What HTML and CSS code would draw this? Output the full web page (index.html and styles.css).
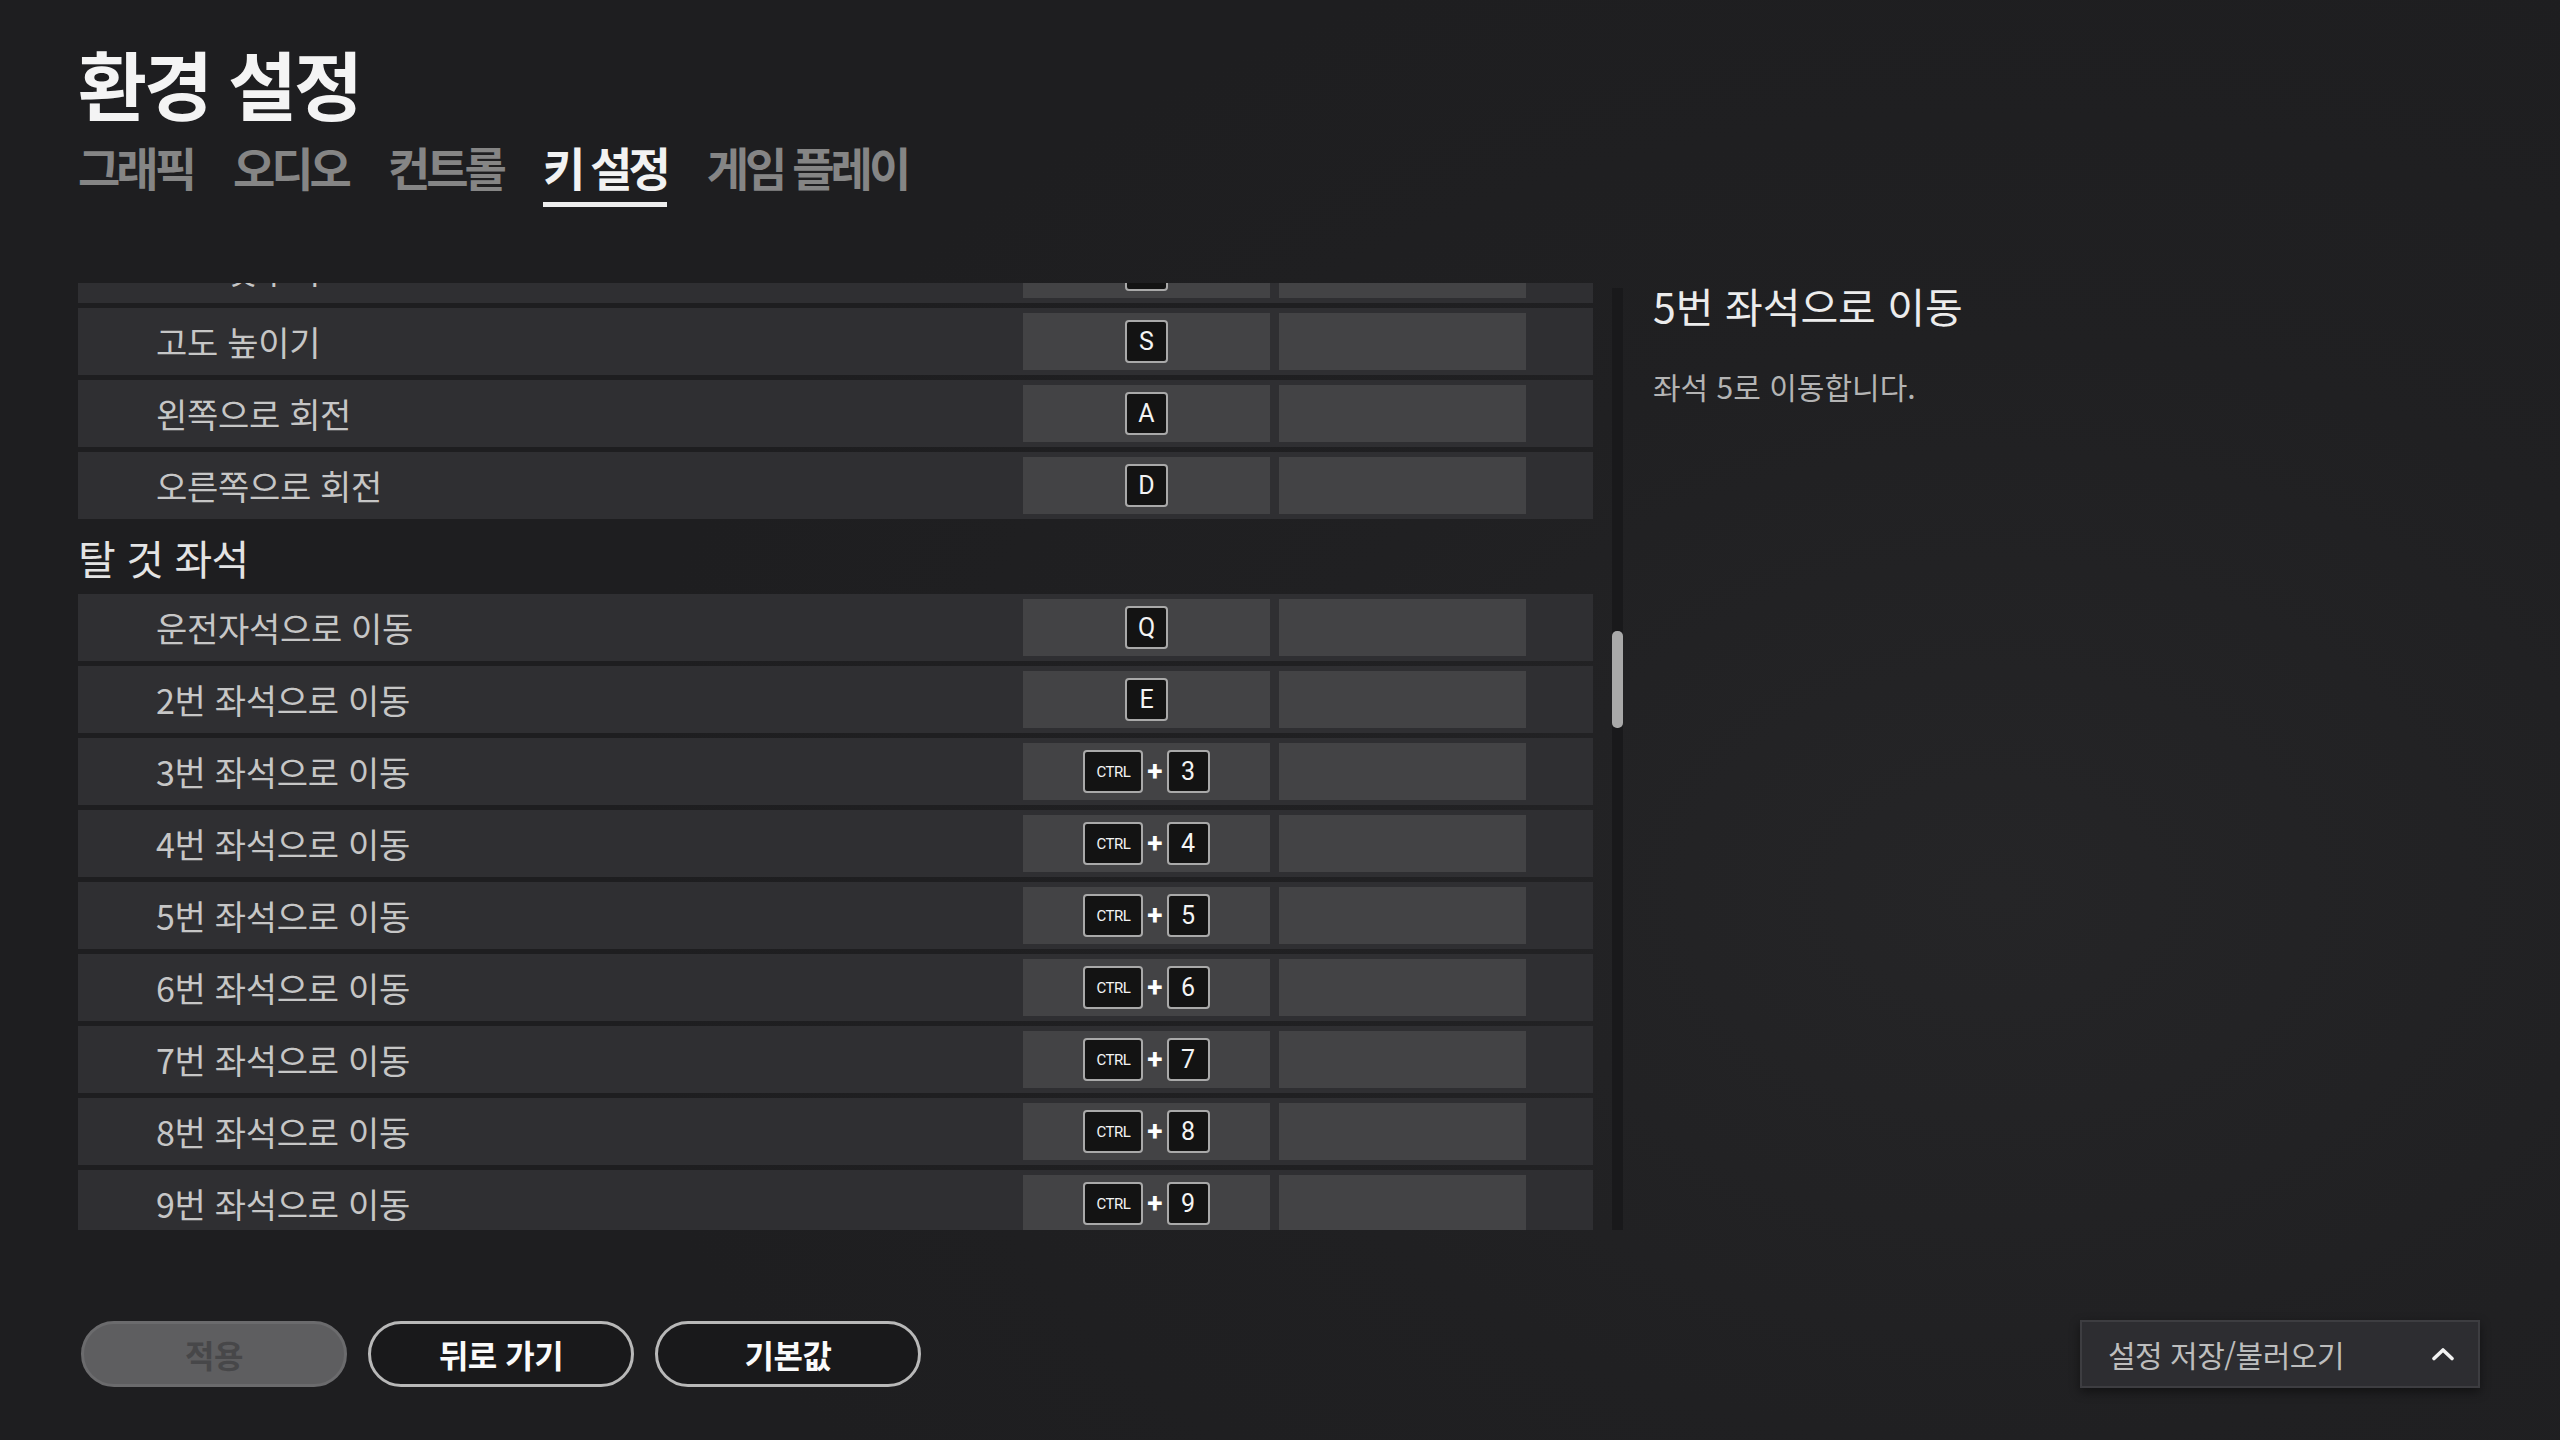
FILE: index.html
```html
<!DOCTYPE html>
<html lang="ko">
<head>
<meta charset="utf-8">
<title>환경 설정</title>
<link rel="stylesheet" href="styles.css">
</head>
<body>
<div class="screen">
  <h1 class="title">환경 설정</h1>
  <nav class="tabs">
    <div class="tab">그래픽</div>
    <div class="tab">오디오</div>
    <div class="tab">컨트롤</div>
    <div class="tab active">키 설정</div>
    <div class="tab">게임 플레이</div>
  </nav>

  <div class="main">
    <div class="list">
      <div class="list-inner">
        <div class="row"><span class="label">고도 낮추기</span><div class="cell"><span class="key">W</span></div><div class="cell"></div></div>
        <div class="row"><span class="label">고도 높이기</span><div class="cell"><span class="key">S</span></div><div class="cell"></div></div>
        <div class="row"><span class="label">왼쪽으로 회전</span><div class="cell"><span class="key">A</span></div><div class="cell"></div></div>
        <div class="row"><span class="label">오른쪽으로 회전</span><div class="cell"><span class="key">D</span></div><div class="cell"></div></div>
        <div class="section">탈 것 좌석</div>
        <div class="row"><span class="label">운전자석으로 이동</span><div class="cell"><span class="key">Q</span></div><div class="cell"></div></div>
        <div class="row"><span class="label">2번 좌석으로 이동</span><div class="cell"><span class="key">E</span></div><div class="cell"></div></div>
        <div class="row"><span class="label">3번 좌석으로 이동</span><div class="cell"><span class="key ctrl">CTRL</span><span class="plus">+</span><span class="key">3</span></div><div class="cell"></div></div>
        <div class="row"><span class="label">4번 좌석으로 이동</span><div class="cell"><span class="key ctrl">CTRL</span><span class="plus">+</span><span class="key">4</span></div><div class="cell"></div></div>
        <div class="row"><span class="label">5번 좌석으로 이동</span><div class="cell"><span class="key ctrl">CTRL</span><span class="plus">+</span><span class="key">5</span></div><div class="cell"></div></div>
        <div class="row"><span class="label">6번 좌석으로 이동</span><div class="cell"><span class="key ctrl">CTRL</span><span class="plus">+</span><span class="key">6</span></div><div class="cell"></div></div>
        <div class="row"><span class="label">7번 좌석으로 이동</span><div class="cell"><span class="key ctrl">CTRL</span><span class="plus">+</span><span class="key">7</span></div><div class="cell"></div></div>
        <div class="row"><span class="label">8번 좌석으로 이동</span><div class="cell"><span class="key ctrl">CTRL</span><span class="plus">+</span><span class="key">8</span></div><div class="cell"></div></div>
        <div class="row"><span class="label">9번 좌석으로 이동</span><div class="cell"><span class="key ctrl">CTRL</span><span class="plus">+</span><span class="key">9</span></div><div class="cell"></div></div>
      </div>
    </div>
    <div class="scroll"><div class="thumb"></div></div>
    <aside class="detail">
      <div class="detail-title">5번 좌석으로 이동</div>
      <div class="detail-desc">좌석 5로 이동합니다.</div>
    </aside>
  </div>

  <div class="footer">
    <div class="buttons">
      <div class="btn disabled">적용</div>
      <div class="btn">뒤로 가기</div>
      <div class="btn">기본값</div>
    </div>
    <div class="select">
      <span class="select-text">설정 저장/불러오기</span>
      <svg class="chev" width="24" height="14" viewBox="0 0 24 14"><path d="M3 11.5 L12 3 L21 11.5" stroke="#f2f2f2" stroke-width="3.6" fill="none" stroke-linecap="round" stroke-linejoin="round"/></svg>
    </div>
  </div>
</div>
</body>
</html>
```

FILE: styles.css
```css
html, body {
  margin: 0;
  padding: 0;
}

body {
  background: #1f1f21;
  font-family: "Noto Sans CJK KR", "Noto Sans", sans-serif;
}

.screen {
  width: 2560px;
  height: 1440px;
  box-sizing: border-box;
  padding: 45px 80px 0 78px;
  display: flex;
  flex-direction: column;
  overflow: hidden;
  background: radial-gradient(ellipse 1400px 1000px at 78% 62%, #252527 0%, #202022 55%, #1e1e20 100%);
}

.title {
  margin: 0;
  font-size: 75px;
  line-height: 75px;
  font-weight: 700;
  color: #f4f4f4;
  letter-spacing: -3px;
}

.tabs {
  display: flex;
  gap: 40px;
  margin-top: 23px;
  align-items: flex-start;
}

.tab {
  font-size: 46px;
  line-height: 46px;
  font-weight: 700;
  letter-spacing: -4px;
  color: #858585;
  padding-bottom: 13px;
  border-bottom: 5px solid transparent;
}

.tab.active {
  color: #f2f2f2;
  border-bottom-color: #eeeeee;
}

.main {
  display: flex;
  margin-top: 76px;
  height: 947px;
  flex: none;
}

.list {
  width: 1515px;
  height: 947px;
  overflow: hidden;
  flex: none;
}

.list-inner {
  margin-top: -47px;
  display: flex;
  flex-direction: column;
  gap: 5px;
}

.row {
  height: 67px;
  box-sizing: border-box;
  display: flex;
  align-items: center;
  gap: 9px;
  padding: 5px 67px 5px 78px;
  background: #2f2f32;
  flex: none;
}

.label {
  flex: 1;
  font-size: 34px;
  letter-spacing: -0.3px;
  color: #c6c6c6;
}

.cell {
  width: 247px;
  height: 57px;
  background: #434345;
  display: flex;
  align-items: center;
  justify-content: center;
  flex: none;
}

.section {
  height: 65px;
  display: flex;
  align-items: center;
  font-size: 41px;
  letter-spacing: -0.5px;
  color: #e4e4e4;
  flex: none;
}

.key {
  box-sizing: border-box;
  width: 43px;
  height: 43px;
  border: 2px solid #a9a9a9;
  border-radius: 4px;
  background: #131313;
  color: #f4f4f4;
  font-family: Roboto, "Liberation Sans", sans-serif;
  font-size: 25px;
  display: flex;
  align-items: center;
  justify-content: center;
}

.key.ctrl {
  width: 60px;
  font-size: 15px;
  letter-spacing: -0.5px;
}

.plus {
  color: #ffffff;
  font-family: Roboto, "Liberation Sans", sans-serif;
  font-size: 28px;
  font-weight: 700;
  margin: 0 4px;
  line-height: 1;
}

.scroll {
  flex: none;
  margin-left: 19px;
  margin-top: 5px;
  width: 11px;
  height: 942px;
  background: #19191b;
  position: relative;
}

.thumb {
  position: absolute;
  left: 0;
  right: 0;
  top: 343px;
  height: 97px;
  background: #a9a9a9;
  border-radius: 5px;
}

.detail {
  margin-left: 30px;
  padding-top: 2px;
}

.detail-title {
  font-size: 41px;
  line-height: 41px;
  color: #ececec;
}

.detail-desc {
  margin-top: 45px;
  font-size: 30px;
  line-height: 30px;
  color: #b4b4b4;
}

.footer {
  margin-top: 90px;
  display: flex;
  justify-content: space-between;
  align-items: center;
}

.buttons {
  display: flex;
  gap: 21px;
  padding-left: 3px;
}

.btn {
  width: 266px;
  height: 66px;
  box-sizing: border-box;
  border-radius: 33px;
  border: 3px solid #b8b8b8;
  background: #19191b;
  color: #fafafa;
  font-size: 32px;
  font-weight: 700;
  letter-spacing: -0.5px;
  display: flex;
  align-items: center;
  justify-content: center;
}

.btn.disabled {
  background: #5e5e60;
  border-color: #6b6b6d;
  color: #474749;
}

.select {
  width: 400px;
  height: 68px;
  box-sizing: border-box;
  background: #2d2d31;
  border: 2px solid #3d3d41;
  display: flex;
  align-items: center;
  justify-content: space-between;
  padding: 0 23px 0 26px;
  box-shadow: 0 4px 10px rgba(0, 0, 0, 0.45);
}

.select-text {
  font-size: 30px;
  letter-spacing: -0.5px;
  color: #bdbdbd;
}

.chev {
  display: block;
}
```
